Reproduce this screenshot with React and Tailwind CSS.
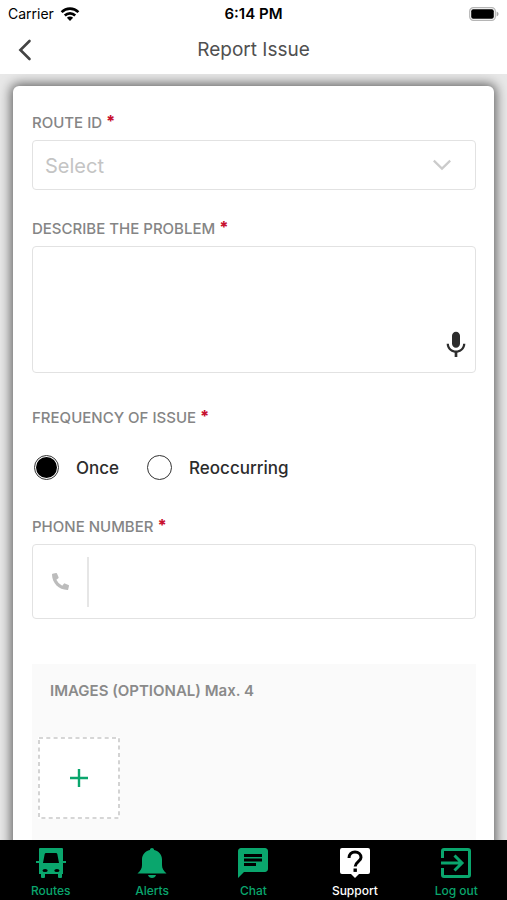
import React, { useState } from 'react'
import { FaPhoneAlt } from 'react-icons/fa'
import { MdChat, MdMic } from 'react-icons/md'

const GREEN = 'text-[#0aa66d]'

function StatusBar() {
  return (
    <div className="grid grid-cols-3 items-center h-7 px-2 text-black">
      <div className="flex items-center gap-1.5 text-sm">
        Carrier
        <svg viewBox="0 0 20 15" className="w-5 h-4" fill="none" stroke="currentColor" strokeWidth="2.6">
          <path d="M1.6 5.6a12 12 0 0 1 16.8 0" />
          <path d="M4.8 9a7.4 7.4 0 0 1 10.4 0" />
          <path d="M10 14.4 6.9 11.2a4.4 4.4 0 0 1 6.2 0Z" fill="currentColor" stroke="none" />
        </svg>
      </div>
      <div className="text-center text-[15px] font-semibold whitespace-nowrap">6:14 PM</div>
      <svg viewBox="0 0 30 14" className="w-[30px] h-[14px] justify-self-end">
        <rect x="0.7" y="0.7" width="25.6" height="12.6" rx="3.6" fill="white" stroke="#b5b5b5" strokeWidth="1.2" />
        <rect x="2.2" y="2.2" width="22.6" height="9.6" rx="2" fill="black" />
        <path d="M27.6 4.6v4.8c1.2-.4 1.9-1.3 1.9-2.4s-.7-2-1.9-2.4Z" fill="#a8a8a8" />
      </svg>
    </div>
  )
}

function Header() {
  return (
    <header className="shrink-0 bg-white">
      <StatusBar />
      <div className="grid grid-cols-[48px_1fr_48px] items-center h-[46px] pb-0.5">
        <button type="button" aria-label="Back" className="flex items-center h-10 pl-4 text-[#444]">
          <svg viewBox="0 0 18 22" className="w-[18px] h-[22px]" fill="none" stroke="currentColor" strokeWidth="2.6">
            <path d="M13.5 2 4.4 11l9.1 9" strokeLinecap="round" />
          </svg>
        </button>
        <h1 className="text-center text-[19px] text-[#505050]">Report Issue</h1>
      </div>
    </header>
  )
}

function Star() {
  return <span className="ml-1 text-base leading-[18px] font-extrabold text-[#c8102e]">*</span>
}

const labelClass = 'flex h-5 text-[15px] leading-[22px] font-medium text-[#858585] whitespace-nowrap'

function ReportForm() {
  const [frequency, setFrequency] = useState('once')

  return (
    <form className="min-h-full pl-[19px] pr-[18px] pt-[26px] rounded-t-md bg-white shadow-[0_0_12px_2px_rgba(0,0,0,0.6)]">
      <label htmlFor="route" className={labelClass}>
        ROUTE ID
        <Star />
      </label>
      <div className="relative mt-2">
        <select
          id="route"
          defaultValue=""
          className="block appearance-none w-full h-[50px] px-3 pt-0.5 rounded border border-[#e2e2e2] bg-white text-xl text-[#c4c4c4]"
        >
          <option value="">Select</option>
        </select>
        <svg
          viewBox="0 0 20 12"
          className="absolute right-6 top-[19px] w-5 h-3 pointer-events-none"
          fill="none"
          stroke="#cbcbcb"
          strokeWidth="2.2"
        >
          <path d="m1.8 1.6 8.2 8 8.2-8" />
        </svg>
      </div>

      <label htmlFor="problem" className={`${labelClass} mt-7`}>
        DESCRIBE THE PROBLEM
        <Star />
      </label>
      <div className="relative mt-2">
        <textarea
          id="problem"
          className="block resize-none w-full h-[127px] p-3 rounded border border-[#e2e2e2] bg-white text-base"
        />
        <button type="button" aria-label="Dictate" className="absolute right-1 bottom-3 text-[#2d2d2d]">
          <MdMic className="size-8" />
        </button>
      </div>

      <fieldset className="mt-[34px]">
        <legend className={labelClass}>
          FREQUENCY OF ISSUE
          <Star />
        </legend>
        <div className="flex gap-7 mt-7 pl-0.5 text-[17px] leading-6 font-medium text-[#2c2c2c]">
          {[
            ['once', 'Once'],
            ['reoccurring', 'Reoccurring'],
          ].map(([value, text]) => (
            <label key={value} className="flex items-center gap-[17px]">
              <input
                type="radio"
                name="frequency"
                value={value}
                checked={frequency === value}
                onChange={() => setFrequency(value)}
                className="appearance-none size-[25px] p-px rounded-full border border-[#333] bg-clip-content checked:bg-black"
              />
              {text}
            </label>
          ))}
        </div>
      </fieldset>

      <label htmlFor="phone" className={`${labelClass} mt-9`}>
        PHONE NUMBER
        <Star />
      </label>
      <div className="flex items-center mt-2 h-[75px] rounded border border-[#e2e2e2]">
        <div className="flex items-center justify-center w-14 h-[50px] border-r-2 border-[#e6e6e6] text-[#bcbcbc]">
          <FaPhoneAlt className="size-[17px] rotate-180 -scale-100" />
        </div>
        <input id="phone" type="tel" className="flex-1 min-w-0 h-full px-3 text-base outline-none" />
      </div>

      <section className="mt-[45px] px-1.5 pt-4 pb-16 bg-[#fafafa]">
        <h2 className="pl-3 text-[15px] leading-[22px] font-semibold text-[#8a8a8a]">IMAGES (OPTIONAL) Max. 4</h2>
        <button
          type="button"
          aria-label="Add image"
          className="flex items-center justify-center mt-[35px] size-[82px] bg-white"
        >
          <svg viewBox="0 0 82 82" className="size-full" fill="none">
            <rect x="1" y="1" width="80" height="80" stroke="#c9c9c9" strokeWidth="1.6" strokeDasharray="4 3.3" />
            <path d="M41 32v18M32 41h18" stroke="#0aa66d" strokeWidth="2.4" />
          </svg>
        </button>
      </section>
    </form>
  )
}

function BusIcon() {
  return (
    <svg viewBox="0 0 32 32" className="size-8" fill="currentColor">
      <path
        fillRule="evenodd"
        d="M5 1h22q1 0 1 1v12h3v2h-3v11h-1v3q0 1-1 1h-2q-1 0-1-1v-3H10v3q0 1-1 1H7q-1 0-1-1v-3H4V16H1v-2h3V2q0-1 1-1Zm6 5q-1 0-1.3 1L8 16h16l-1.7-9q-.3-1-1.3-1Zm-3.5 17.5a2.6 1.6 0 1 0 5.2 0 2.6 1.6 0 0 0-5.2 0Zm11.8 0a2.6 1.6 0 1 0 5.2 0 2.6 1.6 0 0 0-5.2 0Z"
      />
    </svg>
  )
}

function BellIcon() {
  return (
    <svg viewBox="0 0 32 32" className="size-8" fill="currentColor">
      <path d="M16 1c1.2 0 2 .8 2.1 1.9C23 4 26 7.6 26 12.5V18c0 3.5 1.5 5.8 4.5 8.5h-29C4.5 23.8 6 21.5 6 18v-5.5C6 7.6 9 4 13.9 2.9 14 1.8 14.800 1 16 1Z" />
      <path d="M12 28h8c-.5 1.9-2 3-4 3s-3.5-1.1-4-3Z" />
    </svg>
  )
}

function SupportIcon() {
  return (
    <svg viewBox="0 0 32 32" className="size-8">
      <path d="M3 1h26q2 0 2 2v22q0 2-2 2h-9l-4 4-4-4H3q-2 0-2-2V3q0-2 2-2Z" fill="currentColor" />
      <path d="M10 11c0-3.8 2.5-6 6-6s6 2.2 6 5.5c0 4-5.8 4.4-5.8 9" fill="none" stroke="black" strokeWidth="3" />
      <path d="M14.5 21.5h3.4v3.4h-3.4z" fill="black" />
    </svg>
  )
}

function LogoutIcon() {
  return (
    <svg viewBox="0 0 32 32" className="size-8" fill="none" stroke="currentColor" strokeWidth="3">
      <path d="M2.5 11V4q0-1.5 1.5-1.5h24q1.5 0 1.5 1.5v24q0 1.5-1.5 1.5H4q-1.5 0-1.5-1.5v-7" />
      <path d="M1 16h21M14.5 8.5 22 16l-7.5 7.5" />
    </svg>
  )
}

const tabs = [
  { name: 'Routes', icon: <BusIcon /> },
  { name: 'Alerts', icon: <BellIcon /> },
  { name: 'Chat', icon: <MdChat className="size-9 -m-0.5" /> },
  { name: 'Support', icon: <SupportIcon />, active: true },
  { name: 'Log out', icon: <LogoutIcon /> },
]

export default function App() {
  return (
    <div className="flex flex-col h-screen bg-[#e8e8e8] font-['Inter','Liberation_Sans',sans-serif]">
      <Header />
      <main className="flex-1 min-h-0 overflow-hidden px-[13px] pt-3">
        <ReportForm />
      </main>
      <nav className="grid grid-cols-5 shrink-0 h-[60px] pt-[7px] bg-black">
        {tabs.map((tab) => (
          <a
            key={tab.name}
            href="#"
            className={`flex flex-col items-center text-xs font-medium ${tab.active ? 'text-white' : GREEN}`}
          >
            {tab.icon}
            <span className="mt-1">{tab.name}</span>
          </a>
        ))}
      </nav>
    </div>
  )
}
